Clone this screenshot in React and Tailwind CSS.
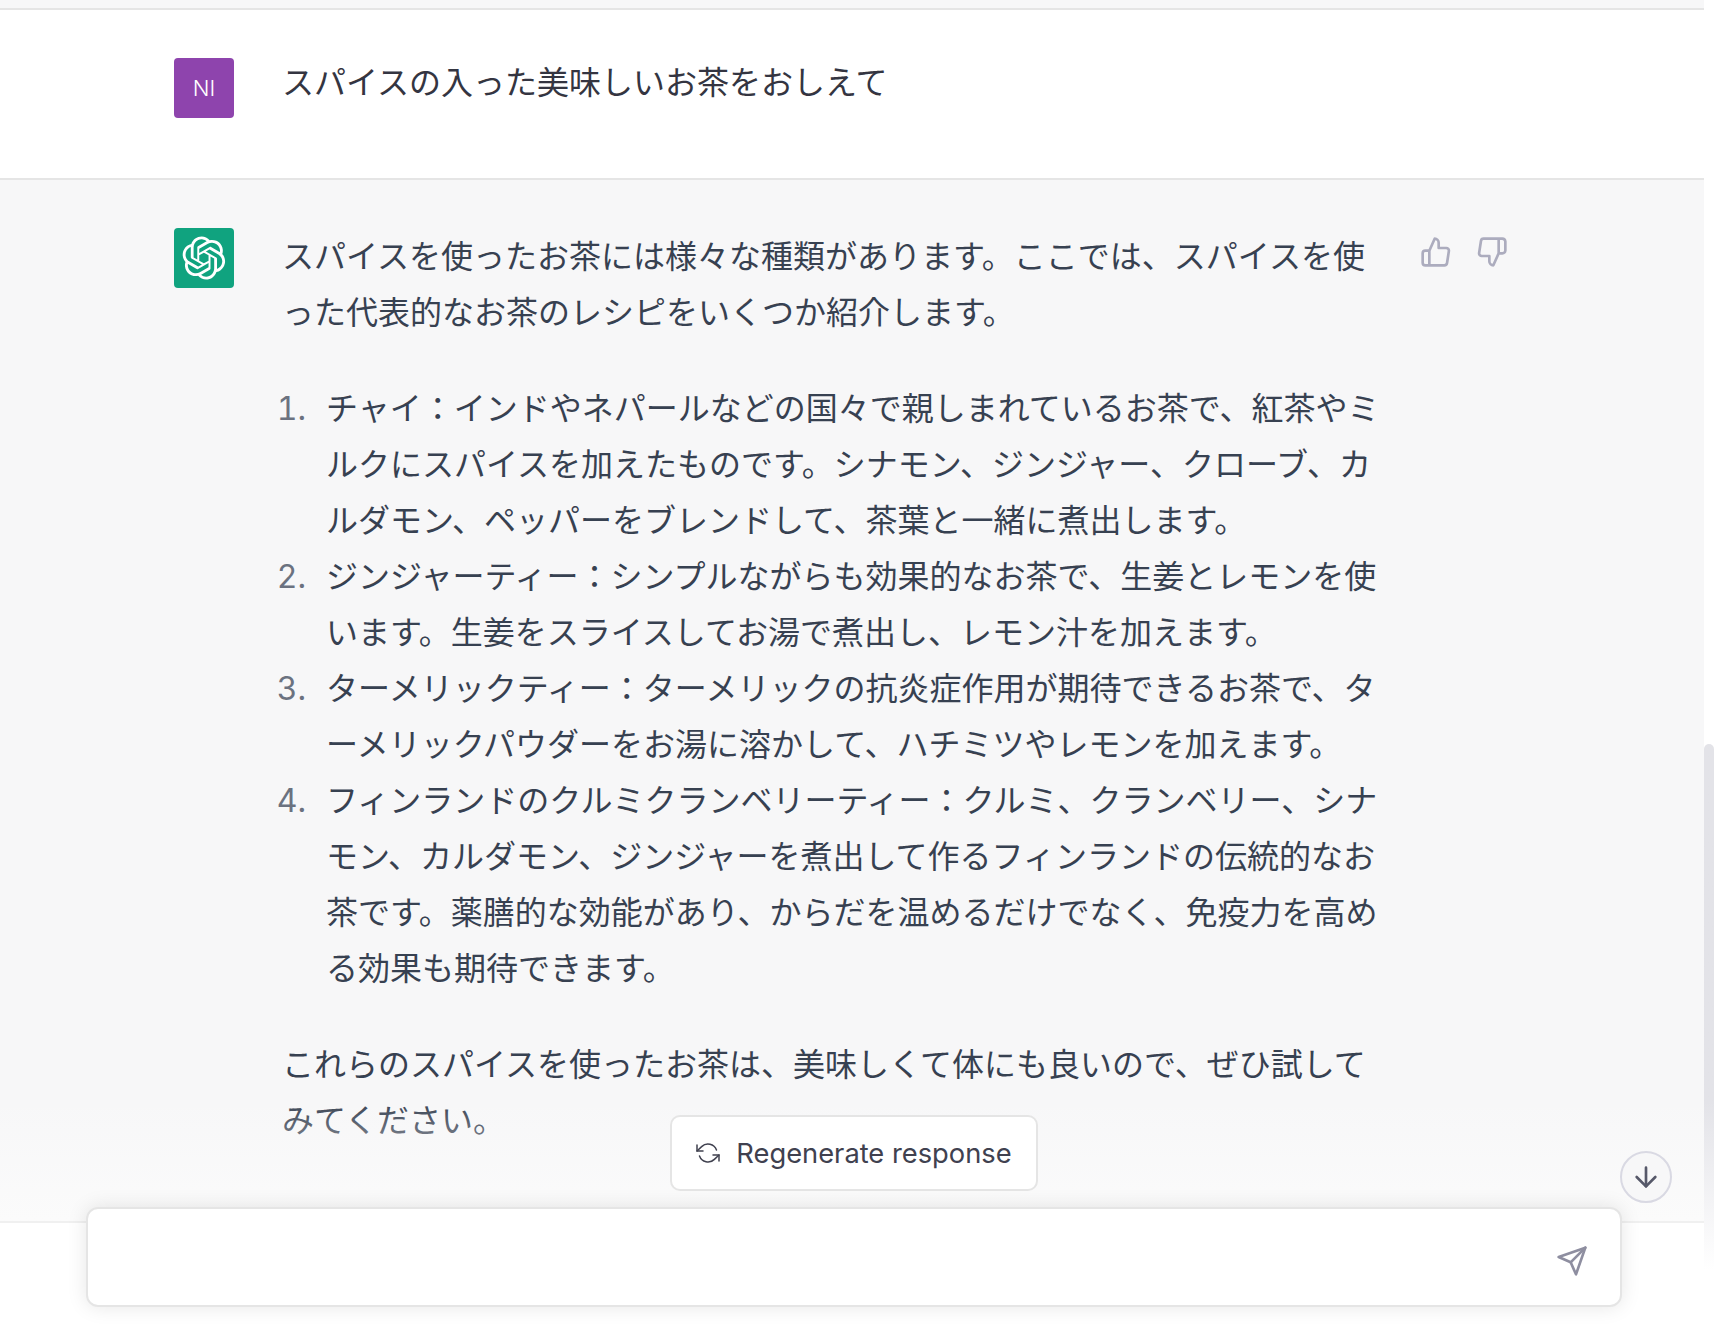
import React from "react";

const items = [
  "チャイ\uFF1Aインドやネパールなどの国々で親しまれているお茶で、紅茶やミルクにスパイスを加えたものです。シナモン、ジンジャー、クローブ、カルダモン、ペッパーをブレンドして、茶葉と一緒に煮出します。",
  "ジンジャーティー\uFF1Aシンプルながらも効果的なお茶で、生姜とレモンを使います。生姜をスライスしてお湯で煮出し、レモン汁を加えます。",
  "ターメリックティー\uFF1Aターメリックの抗炎症作用が期待できるお茶で、ターメリックパウダーをお湯に溶かして、ハチミツやレモンを加えます。",
  "フィンランドのクルミクランベリーティー\uFF1Aクルミ、クランベリー、シナモン、カルダモン、ジンジャーを煮出して作るフィンランドの伝統的なお茶です。薬膳的な効能があり、からだを温めるだけでなく、免疫力を高める効果も期待できます。",
];

function Feather({ className, strokeWidth = 2, children }) {
  return (
    <svg
      viewBox="0 0 24 24"
      fill="none"
      stroke="currentColor"
      strokeWidth={strokeWidth}
      strokeLinecap="round"
      strokeLinejoin="round"
      className={className}
    >
      {children}
    </svg>
  );
}

function OpenAILogo() {
  return (
    <svg viewBox="0 0 41 41" fill="none" className="w-[44px] h-[44px] text-white">
      <path
        fill="currentColor"
        d="M37.5324 16.8707C37.9808 15.5241 38.1363 14.0974 37.9886 12.6859C37.8409 11.2744 37.3934 9.91076 36.676 8.68622C35.6126 6.83404 33.9882 5.3676 32.0373 4.4985C30.0864 3.62941 27.9098 3.40259 25.8215 3.85078C24.8796 2.7893 23.7219 1.94125 22.4257 1.36341C21.1295 0.785575 19.7249 0.491269 18.3058 0.500197C16.1708 0.495044 14.0893 1.16803 12.3614 2.42214C10.6335 3.67624 9.34853 5.44666 8.6917 7.47815C7.30085 7.76286 5.98686 8.3414 4.8377 9.17505C3.68854 10.0087 2.73073 11.0782 2.02839 12.312C0.956464 14.1591 0.498905 16.2988 0.721698 18.4228C0.944492 20.5467 1.83612 22.5449 3.268 24.1293C2.81966 25.4759 2.66413 26.9026 2.81182 28.3141C2.95951 29.7256 3.40701 31.0892 4.12437 32.3138C5.18791 34.1659 6.8123 35.6322 8.76321 36.5013C10.7141 37.3704 12.8907 37.5973 14.9789 37.1492C15.9208 38.2107 17.0786 39.0587 18.3747 39.6366C19.6709 40.2144 21.0755 40.5087 22.4946 40.4998C24.6307 40.5054 26.7133 39.8321 28.4418 38.5772C30.1704 37.3223 31.4556 35.5506 32.1119 33.5179C33.5027 33.2332 34.8167 32.6547 35.9659 31.821C37.115 30.9874 38.0728 29.9178 38.7752 28.684C39.8458 26.8371 40.3023 24.6979 40.0789 22.5748C39.8556 20.4517 38.9639 18.4544 37.5324 16.8707ZM22.4978 37.8849C20.7443 37.8874 19.0459 37.2733 17.6994 36.1501C17.7601 36.117 17.8666 36.0586 17.936 36.0161L25.9004 31.4156C26.1003 31.3019 26.2663 31.137 26.3813 30.9378C26.4964 30.7386 26.5563 30.5124 26.5549 30.2825V19.0542L29.9213 20.998C29.9389 21.0068 29.9541 21.0198 29.9656 21.0359C29.977 21.052 29.9842 21.0707 29.9867 21.0902V30.3889C29.9842 32.375 29.1946 34.2791 27.7909 35.6841C26.3872 37.0892 24.4838 37.8806 22.4978 37.8849ZM6.39227 31.0064C5.51397 29.4888 5.19742 27.7107 5.49804 25.9832C5.55718 26.0187 5.66048 26.0818 5.73461 26.1244L13.699 30.7248C13.8975 30.8408 14.1233 30.902 14.3532 30.902C14.583 30.902 14.8088 30.8408 15.0073 30.7248L24.731 25.1103V28.9979C24.7321 29.0177 24.7283 29.0376 24.7199 29.0556C24.7115 29.0736 24.6988 29.0893 24.6829 29.1012L16.6317 33.7497C14.9096 34.7416 12.8643 35.0097 10.9447 34.4954C9.02506 33.9811 7.38785 32.7263 6.39227 31.0064ZM4.29707 13.6194C5.17156 12.0998 6.55279 10.9364 8.19885 10.3327C8.19885 10.4013 8.19491 10.5228 8.19491 10.6071V19.808C8.19351 20.0378 8.25334 20.2638 8.36823 20.4629C8.48312 20.6619 8.64893 20.8267 8.84863 20.9404L18.5723 26.5542L15.206 28.4979C15.1894 28.5089 15.1703 28.5155 15.1505 28.5173C15.1307 28.5191 15.1107 28.516 15.0924 28.5082L7.04046 23.8557C5.32135 22.8601 4.06716 21.2235 3.55289 19.3046C3.03862 17.3858 3.30624 15.3413 4.29707 13.6194ZM31.955 20.0556L22.2312 14.4411L25.5976 12.4981C25.6142 12.4872 25.6333 12.4805 25.6531 12.4787C25.6729 12.4769 25.6928 12.4801 25.7111 12.4879L33.7631 17.1364C34.9967 17.849 36.0017 18.8982 36.6606 20.1613C37.3194 21.4244 37.6047 22.849 37.4832 24.2684C37.3617 25.6878 36.8382 27.0432 35.9743 28.1759C35.1103 29.3086 33.9415 30.1717 32.6047 30.6641C32.6047 30.5947 32.6047 30.4733 32.6047 30.3889V21.188C32.6066 20.9586 32.5474 20.7328 32.4332 20.5338C32.319 20.3348 32.154 20.1698 31.955 20.0556ZM35.3055 15.0128C35.2464 14.9765 35.1431 14.9142 35.069 14.8717L27.1045 10.2712C26.906 10.1554 26.6803 10.0943 26.4504 10.0943C26.2206 10.0943 25.9948 10.1554 25.7963 10.2712L16.0726 15.8858V11.9982C16.0715 11.9783 16.0753 11.9585 16.0837 11.9405C16.0921 11.9225 16.1048 11.9068 16.1207 11.8949L24.1719 7.25025C25.4053 6.53903 26.8158 6.19376 28.2383 6.25482C29.6608 6.31589 31.0364 6.78077 32.2044 7.59508C33.3723 8.40939 34.2842 9.53945 34.8334 10.8531C35.3826 12.1667 35.5464 13.6095 35.3055 15.0128ZM14.2424 21.9419L10.8752 19.9981C10.8576 19.9893 10.8423 19.9763 10.8309 19.9602C10.8195 19.9441 10.8122 19.9254 10.8098 19.9058V10.6071C10.8107 9.18295 11.2173 7.78848 11.9819 6.58696C12.7466 5.38544 13.8377 4.42659 15.1275 3.82264C16.4173 3.21869 17.8524 2.99464 19.2649 3.1767C20.6775 3.35876 22.0089 3.93941 23.1034 4.85067C23.0427 4.88379 22.937 4.94215 22.8668 4.98473L14.9024 9.58517C14.7025 9.69878 14.5366 9.86356 14.4215 10.0626C14.3065 10.2616 14.2466 10.4877 14.2479 10.7175L14.2424 21.9419ZM16.071 17.9991L20.4018 15.4978L24.7325 17.9975V22.9985L20.4018 25.4983L16.071 22.9985V17.9991Z"
      />
    </svg>
  );
}

export default function App() {
  return (
    <div className="relative h-screen overflow-hidden bg-white font-['Inter','Noto_Sans_CJK_JP',sans-serif] text-[32px] leading-[56px] [line-break:anywhere]">
      <div className="flex flex-col h-full pr-[10px]">
        <div className="h-[10px] shrink-0 bg-[#f7f7f8] border-b-2 border-[#e5e5e5]" />

        {/* user message */}
        <div className="h-[170px] shrink-0 flex pl-[174px] pt-[48px] border-b-2 border-[#e5e5e5] text-[#343541]">
          <div className="w-[60px] h-[60px] rounded-[4px] bg-[#8e44ad] text-white text-[22px] font-light flex items-center justify-center leading-none">
            NI
          </div>
          <div className="ml-[48px] -mt-[3px]">スパイスの入った美味しいお茶をおしえて</div>
        </div>

        {/* answer */}
        <div className="flex-1 flex pl-[174px] pt-[48px] bg-[#f7f7f8] text-[#374151]">
          <div className="w-[60px] h-[60px] shrink-0 rounded-[4px] bg-[#10a37f] flex items-center justify-center">
            <OpenAILogo />
          </div>
          <div className="ml-[48px] mt-[1px] w-[1100px] shrink-0">
            <p>スパイスを使ったお茶には様々な種類があります。ここでは、スパイスを使った代表的なお茶のレシピをいくつか紹介します。</p>
            <ol className="my-[40px]">
              {items.map((text, i) => (
                <li key={i} className="flex">
                  <span className="w-[44px] shrink-0 pr-[20px] flex justify-end whitespace-nowrap tabular-nums text-[#6b7280]">{i + 1}.</span>
                  <span>{text}</span>
                </li>
              ))}
            </ol>
            <p>これらのスパイスを使ったお茶は、美味しくて体にも良いので、ぜひ試してみてください。</p>
          </div>
          <div className="ml-[38px] mt-[8px] flex gap-[24px] text-[#acacbe]">
            <Feather className="w-[32px] h-[32px]">
              <path d="M14 9V5a3 3 0 0 0-3-3l-4 9v11h11.28a2 2 0 0 0 2-1.7l1.38-9a2 2 0 0 0-2-2.3zM7 22H4a2 2 0 0 1-2-2v-7a2 2 0 0 1 2-2h3" />
            </Feather>
            <Feather className="w-[32px] h-[32px]">
              <path d="M10 15v4a3 3 0 0 0 3 3l4-9V2H5.72a2 2 0 0 0-2 1.7l-1.38 9a2 2 0 0 0 2 2.3zm7-13h2.67A2.31 2.31 0 0 1 22 4v7a2.31 2.31 0 0 1-2.33 2H17" />
            </Feather>
          </div>
        </div>
      </div>

      {/* scrollbar thumb */}
      <div className="absolute top-[744px] right-0 w-[10px] h-[526px] rounded-t-[5px] bg-linear-to-b from-[#e3e3e8] from-[68%] to-white" />

      {/* fade and composer */}
      <div className="absolute left-0 right-[10px] bottom-[111px] h-[121px] bg-linear-to-b from-transparent to-[#fbfbfb]" />
      <div className="absolute left-0 right-[10px] bottom-0 h-[111px] bg-white border-t-2 border-[#f0f0f0]" />

      <button className="absolute left-[670px] top-[1115px] w-[368px] h-[76px] flex items-center justify-center gap-[16px] rounded-[10px] border-2 border-[#e5e5e5] bg-white text-[27.3px] leading-none text-[#40414f]">
        <Feather className="w-[24px] h-[24px]" strokeWidth={1.5}>
          <polyline points="1 4 1 10 7 10" />
          <polyline points="23 20 23 14 17 14" />
          <path d="M20.49 9A9 9 0 0 0 5.64 5.64L1 10m22 4l-4.64 4.36A9 9 0 0 1 3.51 15" />
        </Feather>
        <span className="pt-[2px]">Regenerate response</span>
      </button>

      <div className="absolute left-[1620px] top-[1151px] w-[52px] h-[52px] rounded-full border-2 border-[#d9d9e3] bg-[#f7f7f8] flex items-center justify-center text-[#565869]">
        <Feather className="w-[32px] h-[32px]">
          <line x1="12" y1="5" x2="12" y2="19" />
          <polyline points="19 12 12 19 5 12" />
        </Feather>
      </div>

      <div className="absolute left-[86px] top-[1207px] w-[1536px] h-[100px] rounded-[12px] border-2 border-[#e5e5e5] bg-white shadow-[0_0_20px_rgba(0,0,0,0.1)] flex items-center justify-end pr-[32px] text-[#8e8ea0]">
        <Feather className="w-[32px] h-[32px] mt-[8px]">
          <line x1="22" y1="2" x2="11" y2="13" />
          <polygon points="22 2 15 22 11 13 2 9 22 2" />
        </Feather>
      </div>
    </div>
  );
}
